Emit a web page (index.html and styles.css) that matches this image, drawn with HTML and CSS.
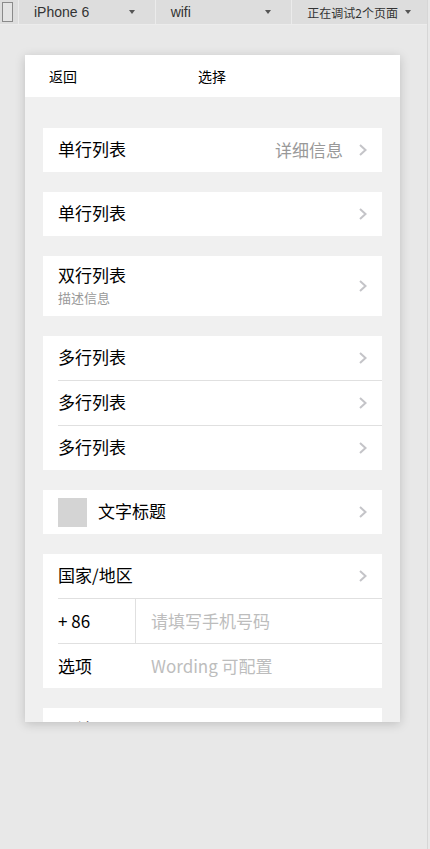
FILE: index.html
```html
<!DOCTYPE html>
<html lang="zh-CN">

<head>
    <meta charset="UTF-8">
    <meta name="viewport" content="width=device-width, initial-scale=1.0">
    <title>选择</title>
    <link rel="stylesheet" href="styles.css">
</head>

<body>
    <div class="page">
        <div class="toolbar">
            <div class="tool tool-check"><span class="check"></span></div>
            <div class="tool tool-device">iPhone 6<span class="caret"></span></div>
            <div class="tool tool-net">wifi<span class="caret"></span></div>
            <div class="tool tool-debug">正在调试2个页面<span class="caret"></span></div>
        </div>

        <div class="device">
            <div class="navbar">
                <span class="nav-back">返回</span>
                <span class="nav-title">选择</span>
            </div>

            <div class="content">
                <div class="cells">
                    <div class="cell">
                        <span class="cell-title">单行列表</span>
                        <span class="cell-value">详细信息</span>
                        <svg class="arrow" width="8" height="12" viewBox="0 0 8 12"><polyline points="1,1 6.5,6 1,11" /></svg>
                    </div>
                </div>

                <div class="cells">
                    <div class="cell">
                        <span class="cell-title">单行列表</span>
                        <svg class="arrow" width="8" height="12" viewBox="0 0 8 12"><polyline points="1,1 6.5,6 1,11" /></svg>
                    </div>
                </div>

                <div class="cells">
                    <div class="cell cell-double">
                        <div class="cell-body">
                            <div class="cell-title">双行列表</div>
                            <div class="cell-desc">描述信息</div>
                        </div>
                        <svg class="arrow" width="8" height="12" viewBox="0 0 8 12"><polyline points="1,1 6.5,6 1,11" /></svg>
                    </div>
                </div>

                <div class="cells">
                    <div class="cell">
                        <span class="cell-title">多行列表</span>
                        <svg class="arrow" width="8" height="12" viewBox="0 0 8 12"><polyline points="1,1 6.5,6 1,11" /></svg>
                    </div>
                    <div class="cell">
                        <span class="cell-title">多行列表</span>
                        <svg class="arrow" width="8" height="12" viewBox="0 0 8 12"><polyline points="1,1 6.5,6 1,11" /></svg>
                    </div>
                    <div class="cell">
                        <span class="cell-title">多行列表</span>
                        <svg class="arrow" width="8" height="12" viewBox="0 0 8 12"><polyline points="1,1 6.5,6 1,11" /></svg>
                    </div>
                </div>

                <div class="cells">
                    <div class="cell">
                        <span class="thumb"></span>
                        <span class="cell-title">文字标题</span>
                        <svg class="arrow" width="8" height="12" viewBox="0 0 8 12"><polyline points="1,1 6.5,6 1,11" /></svg>
                    </div>
                </div>

                <div class="cells">
                    <div class="cell">
                        <span class="cell-title">国家/地区</span>
                        <svg class="arrow" width="8" height="12" viewBox="0 0 8 12"><polyline points="1,1 6.5,6 1,11" /></svg>
                    </div>
                    <div class="cell cell-form">
                        <span class="form-label form-label-split">+ 86</span>
                        <span class="placeholder">请填写手机号码</span>
                    </div>
                    <div class="cell cell-form">
                        <span class="form-label">选项</span>
                        <span class="placeholder">Wording 可配置</span>
                    </div>
                </div>

                <div class="cells">
                    <div class="cell">
                        <span class="cell-title">开关</span>
                    </div>
                </div>
            </div>
        </div>
    </div>
</body>

</html>
```

FILE: styles.css
```css
body {
    margin: 0;
    background-color: #e8e8e8;
    font-family: "Noto Sans CJK SC", "Liberation Sans", sans-serif;
}

.page {
    width: 427px;
    min-height: 849px;
    border-right: 1px solid #d6d6d6;
    overflow: hidden;
}

/* devtools bar */
.toolbar {
    display: flex;
    height: 24px;
    background-color: #dddddd;
    border-bottom: 1px solid #ececec;
}

.tool {
    display: flex;
    align-items: center;
    position: relative;
    padding-left: 15px;
    border-right: 1px solid #ebebeb;
    font-family: "Liberation Sans", "Noto Sans CJK SC", sans-serif;
    font-size: 14px;
    color: #333;
}

.tool-check {
    width: 18px;
    padding-left: 0;
    justify-content: flex-start;
}

.check {
    width: 9px;
    height: 18px;
    margin-left: 2px;
    border: 1px solid #8a8a8a;
    background-color: #e4e4e4;
}

.tool-device,
.tool-net {
    width: 121px;
}

.tool-debug {
    width: 120px;
    font-family: "Noto Sans CJK SC", sans-serif;
    font-size: 12px;
    border-right: none;
}

.caret {
    position: absolute;
    right: 20px;
    top: 10px;
    border-left: 3px solid transparent;
    border-right: 3px solid transparent;
    border-top: 4px solid #555;
}

.tool-debug .caret {
    right: 16px;
}

/* phone */
.device {
    width: 375px;
    height: 667px;
    margin: 30px 0 0 25px;
    background-color: #f0f0f0;
    box-shadow: 0 2px 10px rgba(0, 0, 0, 0.18);
    overflow: hidden;
}

.navbar {
    display: flex;
    align-items: center;
    height: 42px;
    padding-bottom: 1px;
    box-sizing: border-box;
    background-color: #fff;
    font-size: 14px;
    color: #000;
}

.nav-back {
    margin-left: 24px;
    width: 149px;
}

.content {
    padding: 31px 18px 0;
}

.cells {
    background-color: #fff;
    margin-bottom: 20px;
}

.cell {
    display: flex;
    align-items: center;
    height: 44px;
    padding: 0 15px 2px;
    box-sizing: border-box;
    font-size: 17px;
    color: #000;
}

.cell + .cell {
    border-top: 1px solid #e0e0e0;
    height: 45px;
    margin-left: 15px;
    padding-left: 0;
}

.cell-title {
    flex: 1;
    line-height: 22px;
}

.cell-value {
    color: #999;
    margin-right: 16px;
}

.arrow {
    fill: none;
    stroke: #c4c4c8;
    stroke-width: 2;
    margin-top: 2px;
}

.cell-double {
    height: 60px;
}

.cell-body {
    flex: 1;
}

.cell-desc {
    margin-top: 3px;
    font-size: 13px;
    line-height: 17px;
    color: #999;
}

.thumb {
    width: 29px;
    height: 29px;
    margin: 2px 11px 0 0;
    background-color: #d4d4d4;
}

.cell-form {
    align-items: stretch;
    padding-bottom: 0;
}

.form-label {
    display: flex;
    align-items: center;
    width: 93px;
    padding-bottom: 2px;
}

.form-label-split {
    width: 77px;
    border-right: 1px solid #e0e0e0;
    margin-right: 15px;
}

.placeholder {
    display: flex;
    align-items: center;
    padding-bottom: 2px;
    color: #bdbdbd;
}
```
